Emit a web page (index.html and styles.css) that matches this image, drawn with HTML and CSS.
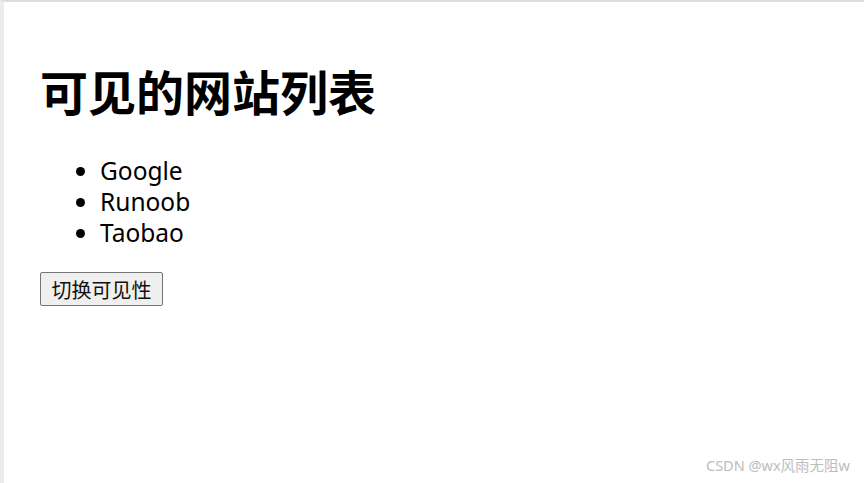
FILE: index.html
```html
<!DOCTYPE html>
<html lang="zh">
<head>
<meta charset="utf-8">
<title>可见的网站列表</title>
<link rel="stylesheet" href="styles.css">
</head>
<body>
<div class="frame">
  <h1 class="title">可见的网站列表</h1>
  <ul class="sites">
    <li>Google</li>
    <li>Runoob</li>
    <li>Taobao</li>
  </ul>
  <button class="toggle" type="button">切换可见性</button>
  <div class="watermark">CSDN @wx风雨无阻w</div>
</div>
</body>
</html>
```
FILE: styles.css
```css
html, body {
  margin: 0;
  padding: 0;
  background: #ffffff;
}
body {
  font-family: "Noto Sans", "Noto Sans CJK SC", sans-serif;
  color: #000;
}
.frame {
  position: relative;
  box-sizing: border-box;
  width: 864px;
  height: 483px;
  border-top: 2px solid #dedede;
  border-left: 4px solid #ececec;
  padding-left: 36px;
  overflow: hidden;
}
.title {
  margin: 60px 0 0 0;
  font-family: "Noto Sans CJK SC", sans-serif;
  font-size: 48px;
  font-weight: 700;
  line-height: 56px;
}
.sites {
  margin: 37px 0 0 0;
  padding-left: 60px;
  font-size: 24.5px;
  line-height: 31px;
}
.toggle {
  display: block;
  margin-top: 24px;
  box-sizing: border-box;
  width: 123px;
  height: 34px;
  padding: 1px 0 0 0;
  font-family: "Noto Sans CJK SC", sans-serif;
  font-size: 20px;
  font-weight: 400;
  line-height: 1;
  color: #111;
  background: #efefef;
  border: 1px solid #767676;
  border-radius: 2px;
}
.watermark {
  position: absolute;
  right: 14px;
  bottom: 8px;
  font-family: "Noto Sans", "Noto Sans CJK SC", sans-serif;
  font-size: 14.5px;
  color: #bdbdbd;
}
```
